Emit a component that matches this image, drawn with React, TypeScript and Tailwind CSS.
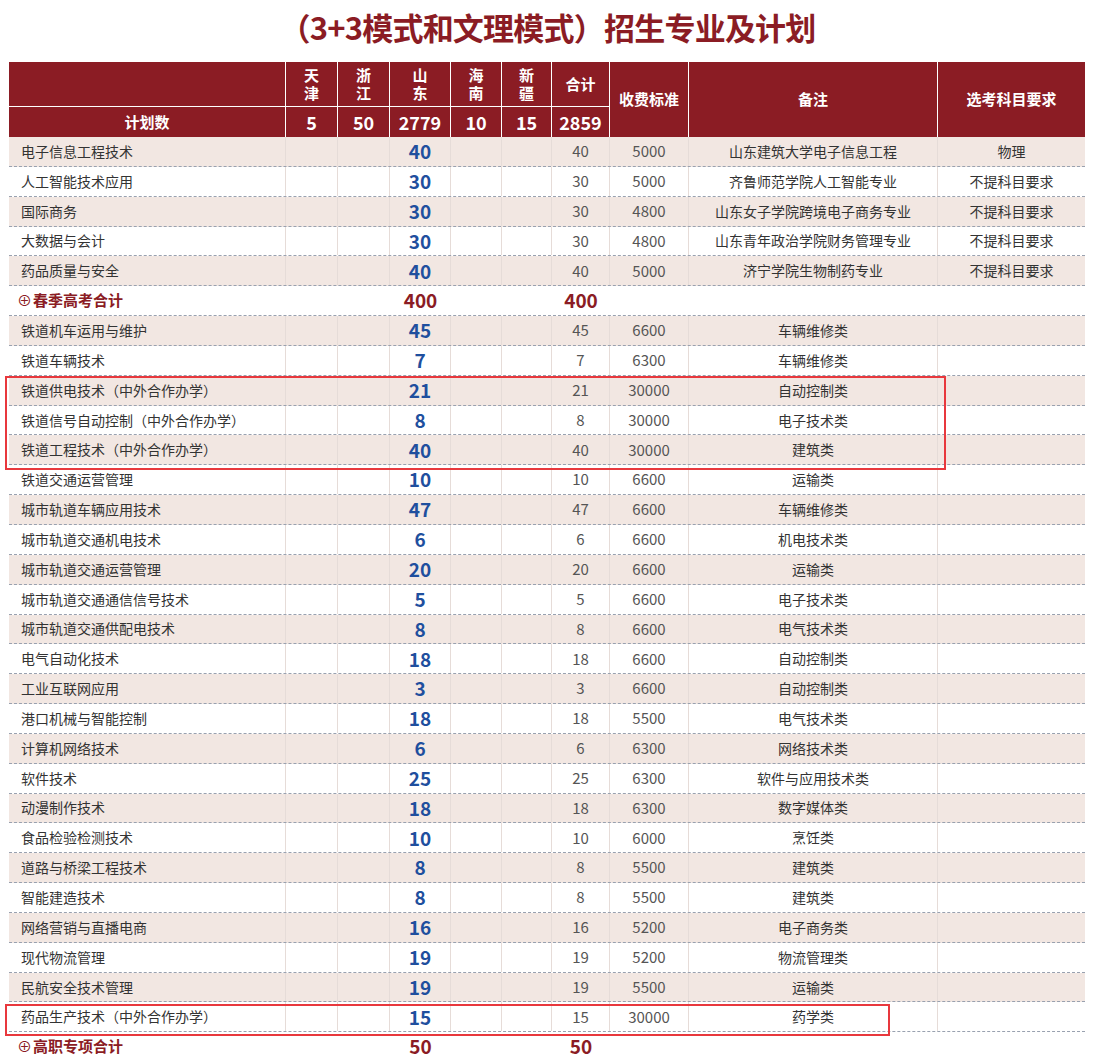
import React from 'react';

type Row = [string, string, string, string, string, string];

const spring: Row[] = [
  ['电子信息工程技术', '40', '40', '5000', '山东建筑大学电子信息工程', '物理'],
  ['人工智能技术应用', '30', '30', '5000', '齐鲁师范学院人工智能专业', '不提科目要求'],
  ['国际商务', '30', '30', '4800', '山东女子学院跨境电子商务专业', '不提科目要求'],
  ['大数据与会计', '30', '30', '4800', '山东青年政治学院财务管理专业', '不提科目要求'],
  ['药品质量与安全', '40', '40', '5000', '济宁学院生物制药专业', '不提科目要求'],
];

const voc: Row[] = [
  ['铁道机车运用与维护', '45', '45', '6600', '车辆维修类', ''],
  ['铁道车辆技术', '7', '7', '6300', '车辆维修类', ''],
  ['铁道供电技术（中外合作办学）', '21', '21', '30000', '自动控制类', ''],
  ['铁道信号自动控制（中外合作办学）', '8', '8', '30000', '电子技术类', ''],
  ['铁道工程技术（中外合作办学）', '40', '40', '30000', '建筑类', ''],
  ['铁道交通运营管理', '10', '10', '6600', '运输类', ''],
  ['城市轨道车辆应用技术', '47', '47', '6600', '车辆维修类', ''],
  ['城市轨道交通机电技术', '6', '6', '6600', '机电技术类', ''],
  ['城市轨道交通运营管理', '20', '20', '6600', '运输类', ''],
  ['城市轨道交通通信信号技术', '5', '5', '6600', '电子技术类', ''],
  ['城市轨道交通供配电技术', '8', '8', '6600', '电气技术类', ''],
  ['电气自动化技术', '18', '18', '6600', '自动控制类', ''],
  ['工业互联网应用', '3', '3', '6600', '自动控制类', ''],
  ['港口机械与智能控制', '18', '18', '5500', '电气技术类', ''],
  ['计算机网络技术', '6', '6', '6300', '网络技术类', ''],
  ['软件技术', '25', '25', '6300', '软件与应用技术类', ''],
  ['动漫制作技术', '18', '18', '6300', '数字媒体类', ''],
  ['食品检验检测技术', '10', '10', '6000', '烹饪类', ''],
  ['道路与桥梁工程技术', '8', '8', '5500', '建筑类', ''],
  ['智能建造技术', '8', '8', '5500', '建筑类', ''],
  ['网络营销与直播电商', '16', '16', '5200', '电子商务类', ''],
  ['现代物流管理', '19', '19', '5200', '物流管理类', ''],
  ['民航安全技术管理', '19', '19', '5500', '运输类', ''],
  ['药品生产技术（中外合作办学）', '15', '15', '30000', '药学类', ''],
];

const cols = 'grid grid-cols-[277px_52px_52px_61px_51px_50px_58px_79px_249px_147px]';
const cell = 'flex items-center justify-center border-r border-white';

const DataRow = ({ r, pink }: { r: Row; pink: boolean }) => (
  <div className={`${cols} h-[29.85px] border-b border-dashed border-gray-400 text-[14px] text-[#333] ${pink ? 'bg-[#f2e7e2]' : 'bg-white'}`}>
    <div className="flex items-center pl-3 border-r border-[#e6dcd8]">{r[0]}</div>
    <div className="border-r border-[#e6dcd8]" />
    <div className="border-r border-[#e6dcd8]" />
    <div className="flex items-center justify-center border-r border-[#e6dcd8] text-[19px] font-bold text-[#1f4f9e]">{r[1]}</div>
    <div className="border-r border-[#e6dcd8]" />
    <div className="border-r border-[#e6dcd8]" />
    <div className="flex items-center justify-center border-r border-[#e6dcd8] text-[15px] text-[#555]">{r[2]}</div>
    <div className="flex items-center justify-center border-r border-[#e6dcd8] text-[15px] text-[#555]">{r[3]}</div>
    <div className="flex items-center justify-center border-r border-[#e6dcd8]">{r[4]}</div>
    <div className="flex items-center justify-center">{r[5]}</div>
  </div>
);

const TotalRow = ({ label, n }: { label: string; n: string }) => (
  <div className={`${cols} h-[29.85px] border-b border-dashed border-gray-400 bg-white font-bold text-[#8b1c24]`}>
    <div className="flex items-center pl-2 text-[15px]">
      <span className="mr-[1px] font-normal text-[15px]">⊕</span>{label}
    </div>
    <div /><div />
    <div className="flex items-center justify-center text-[19px]">{n}</div>
    <div /><div />
    <div className="flex items-center justify-center text-[19px]">{n}</div>
    <div /><div /><div />
  </div>
);

export default function App() {
  return (
    <div className="relative w-[1095px] h-[1057px] overflow-hidden bg-white" style={{ fontFamily: '"Noto Sans CJK SC", "Noto Sans", sans-serif' }}>
      <h1 className="h-[62px] flex items-center justify-center text-[31px] font-bold text-[#8b1c24] tracking-tight pb-2">
        （3+3模式和文理模式）招生专业及计划
      </h1>
      <div className="ml-[9px] w-[1076px]">
        <div className={`${cols} grid-rows-[45px_30px] bg-[#8b1c24] text-white font-bold text-[15px]`}>
          <div className="border-r border-white border-b" />
          {['天津', '浙江', '山东', '海南', '新疆'].map((t) => (
            <div key={t} className={`${cell} border-b flex-col leading-[18px]`}>
              <span>{t[0]}</span><span>{t[1]}</span>
            </div>
          ))}
          <div className={`${cell} border-b`}>合计</div>
          <div className={`${cell} row-span-2`}>收费标准</div>
          <div className={`${cell} row-span-2`}>备注</div>
          <div className="flex items-center justify-center row-span-2">选考科目要求</div>
          <div className={cell}>计划数</div>
          {['5', '50', '2779', '10', '15', '2859'].map((n) => (
            <div key={n} className={`${cell} text-[18px]`}>{n}</div>
          ))}
        </div>
        {spring.map((r, i) => <DataRow key={r[0]} r={r} pink={i % 2 === 0} />)}
        <TotalRow label="春季高考合计" n="400" />
        {voc.map((r, i) => <DataRow key={r[0]} r={r} pink={i % 2 === 0} />)}
        <TotalRow label="高职专项合计" n="50" />
      </div>
      <div className="absolute left-[5px] top-[376px] w-[941px] h-[94px] border-2 border-[#e8383d]" />
      <div className="absolute left-[5px] top-[1004px] w-[885px] h-[32px] border-2 border-[#e8383d]" />
    </div>
  );
}
